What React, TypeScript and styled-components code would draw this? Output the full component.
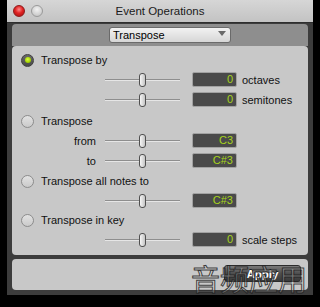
import React from "react";
import styled, { createGlobalStyle } from "styled-components";

const GlobalStyle = createGlobalStyle`
    html, body {
        margin: 0;
        padding: 0;
        background: #000;
    }
    body {
        font-family: "Liberation Sans", Arial, sans-serif;
        font-size: 11px;
        color: #111;
    }
`;

const Screen = styled.div`
    position: relative;
    width: 320px;
    height: 307px;
    background: #000;
    overflow: hidden;
`;

const Window = styled.div`
    margin-left: 7px;
    width: 306px;
    height: 295px;
    background: #3c3c3c;
    display: flex;
    flex-direction: column;
`;

const TitleBar = styled.div`
    height: 22px;
    display: flex;
    align-items: center;
    position: relative;
    background: linear-gradient(#d6d6d6, #c3c3c3);
    border-bottom: 1px solid #2e2e2e;
`;

const Lights = styled.div`
    display: flex;
    gap: 6px;
    padding-left: 6px;
`;

const Light = styled.div<{ $red?: boolean }>`
    width: 12px;
    height: 12px;
    border-radius: 50%;
    box-sizing: border-box;
    border: 1px solid ${(p) => (p.$red ? "#8e1a1a" : "#9a9a9a")};
    background: ${(p) =>
        p.$red
            ? "radial-gradient(circle at 50% 35%, #ff8a8a 0%, #e02424 45%, #a80e0e 100%)"
            : "radial-gradient(circle at 50% 35%, #f2f2f2 0%, #d2d2d2 60%, #bcbcbc 100%)"};
`;

const Title = styled.div`
    position: absolute;
    left: 0;
    right: 0;
    text-align: center;
    font-size: 11.5px;
    color: #1a1a1a;
`;

const Body = styled.div`
    flex: 1;
    display: flex;
    flex-direction: column;
    padding: 1px 5px 5px;
`;

const Header = styled.div`
    height: 22px;
    background: #8e8e8e;
    border-radius: 4px 4px 0 0;
    box-sizing: border-box;
    padding-top: 3px;
    padding-left: 97px;
`;

const Dropdown = styled.div`
    width: 122px;
    height: 16px;
    box-sizing: border-box;
    border: 1px solid #6a6a6a;
    border-radius: 3px;
    background: linear-gradient(#f2f2f2, #d6d6d6);
    display: flex;
    align-items: center;
    justify-content: space-between;
    padding: 0 4px 0 3px;
    font-size: 11px;
    color: #000;
`;

const Arrow = styled.div`
    width: 0;
    height: 0;
    border-left: 4px solid transparent;
    border-right: 4px solid transparent;
    border-top: 5px solid #6a6a6a;
    margin-bottom: 3px;
`;

const Panel = styled.div`
    background: #c8c8c8;
    border-radius: 4px;
    display: flex;
    flex-direction: column;
    gap: 5px;
    padding: 7px 0 8px;
`;

const Option = styled.div<{ $mt?: number }>`
    height: 14px;
    display: flex;
    align-items: center;
    gap: 7px;
    padding-left: 9px;
    margin-top: ${(p) => p.$mt ?? 0}px;
`;

const Radio = styled.div<{ $on?: boolean }>`
    width: 13px;
    height: 13px;
    border-radius: 50%;
    box-sizing: border-box;
    display: flex;
    align-items: center;
    justify-content: center;
    border: 1px solid ${(p) => (p.$on ? "#3e3e3e" : "#8c8c8c")};
    background: ${(p) =>
        p.$on
            ? "linear-gradient(#6a6a6a, #4a4a4a)"
            : "linear-gradient(#e2e2e2, #cacaca)"};
`;

const Dot = styled.div`
    width: 6px;
    height: 6px;
    border-radius: 50%;
    background: radial-gradient(circle at 45% 40%, #d8ff40 0%, #a6d400 60%, #7ea000 100%);
`;

const Row = styled.div`
    height: 15px;
    display: flex;
    align-items: center;
`;

const Label = styled.div`
    width: 84px;
    text-align: right;
`;

const Slider = styled.div`
    width: 75px;
    height: 15px;
    margin-left: 9px;
    display: flex;
    align-items: center;
    justify-content: center;
    background: linear-gradient(
        to bottom,
        transparent 7px,
        #8e8e8e 7px,
        #8e8e8e 8px,
        #e6e6e6 8px,
        #e6e6e6 9px,
        transparent 9px
    );
`;

const Thumb = styled.div`
    width: 7px;
    height: 14px;
    box-sizing: border-box;
    border: 1px solid #505050;
    border-radius: 3px;
    background: linear-gradient(to right, #f6f6f6, #c4c4c4);
`;

const Value = styled.div`
    width: 45px;
    height: 15px;
    margin-left: 12px;
    box-sizing: border-box;
    border: 1px solid #a2a2a2;
    border-radius: 2px;
    background: #4a4a4a;
    color: #a6d41a;
    text-align: right;
    padding-right: 3px;
    line-height: 13px;
    font-size: 11px;
`;

const Unit = styled.div`
    margin-left: 5px;
`;

const Footer = styled.div`
    margin-top: 4px;
    height: 31px;
    background: #c8c8c8;
    border-radius: 4px;
    display: flex;
    justify-content: flex-end;
    padding: 6px 7px 0 0;
    box-sizing: border-box;
`;

const ApplyButton = styled.button`
    width: 77px;
    height: 17px;
    padding: 0;
    border: 1px solid #2c2c2c;
    border-radius: 3px;
    background: linear-gradient(#7a7a7a, #4e4e4e 50%, #3a3a3a);
    color: #fff;
    font-family: "Liberation Sans", Arial, sans-serif;
    font-weight: bold;
    font-size: 11.5px;
    text-shadow: 0 -1px 0 #222;
`;

const Watermark = styled.div`
    position: absolute;
    left: 191px;
    top: 264px;
    font-family: "Noto Sans CJK SC", sans-serif;
    font-size: 29px;
    line-height: 1;
    color: rgba(255, 255, 255, 0.25);
    -webkit-text-stroke: 1px rgba(30, 30, 30, 0.85);
    pointer-events: none;
`;

type SliderRow = { label?: string; value: string; unit?: string };

const groups: { title: string; on?: boolean; mt: number; rows: SliderRow[] }[] = [
    {
        title: "Transpose by",
        on: true,
        mt: 0,
        rows: [
            { value: "0", unit: "octaves" },
            { value: "0", unit: "semitones" },
        ],
    },
    {
        title: "Transpose",
        mt: 2,
        rows: [
            { label: "from", value: "C3" },
            { label: "to", value: "C#3" },
        ],
    },
    { title: "Transpose all notes to", mt: 1, rows: [{ value: "C#3" }] },
    { title: "Transpose in key", mt: 0, rows: [{ value: "0", unit: "scale steps" }] },
];

export default function App() {
    return (
        <Screen>
            <GlobalStyle />
            <Window>
                <TitleBar>
                    <Lights>
                        <Light $red />
                        <Light />
                    </Lights>
                    <Title>Event Operations</Title>
                </TitleBar>
                <Body>
                    <Header>
                        <Dropdown>
                            Transpose
                            <Arrow />
                        </Dropdown>
                    </Header>
                    <Panel>
                        {groups.map((g) => (
                            <React.Fragment key={g.title}>
                                <Option $mt={g.mt}>
                                    <Radio $on={g.on}>{g.on && <Dot />}</Radio>
                                    {g.title}
                                </Option>
                                {g.rows.map((r, i) => (
                                    <Row key={i}>
                                        <Label>{r.label}</Label>
                                        <Slider>
                                            <Thumb />
                                        </Slider>
                                        <Value>{r.value}</Value>
                                        {r.unit && <Unit>{r.unit}</Unit>}
                                    </Row>
                                ))}
                            </React.Fragment>
                        ))}
                    </Panel>
                    <Footer>
                        <ApplyButton>Apply</ApplyButton>
                    </Footer>
                </Body>
            </Window>
            <Watermark>音频应用</Watermark>
        </Screen>
    );
}
